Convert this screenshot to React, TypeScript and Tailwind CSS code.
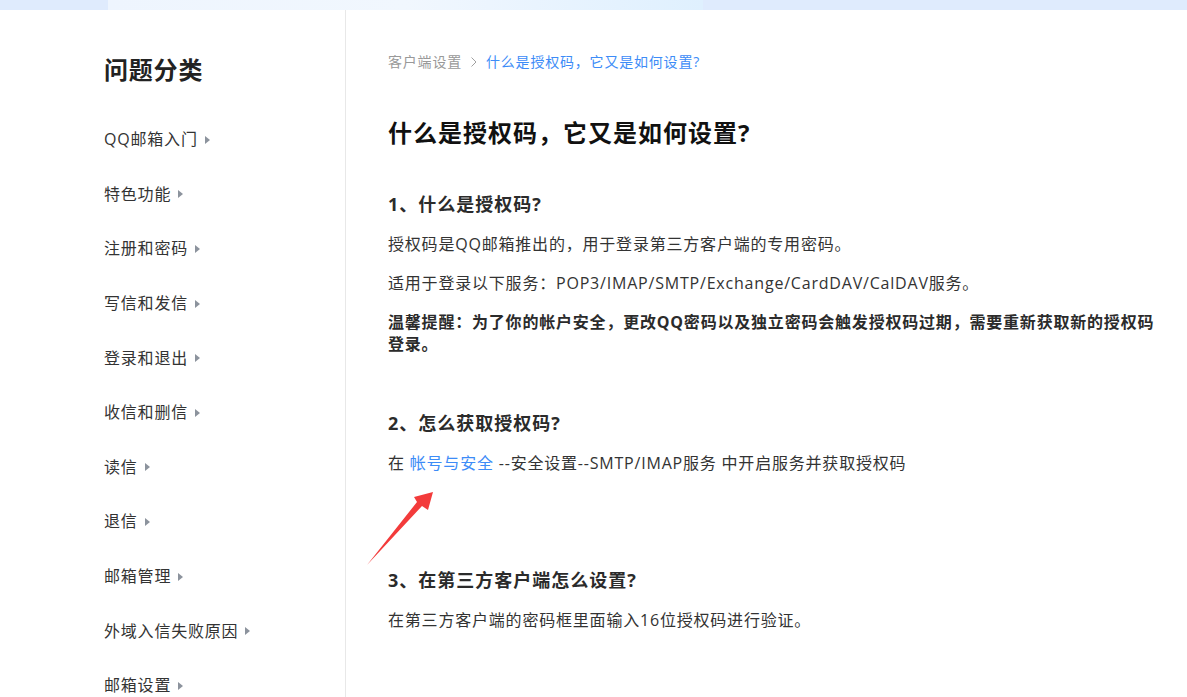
const font = { fontFamily: '"Open Sans", "Noto Sans CJK SC", sans-serif' };

const categories = [
  'QQ邮箱入门',
  '特色功能',
  '注册和密码',
  '写信和发信',
  '登录和退出',
  '收信和删信',
  '读信',
  '退信',
  '邮箱管理',
  '外域入信失败原因',
  '邮箱设置',
];

function Sidebar() {
  return (
    <aside className="w-[346px] shrink-0 border-r border-[#e8e8e8] pl-[104px] pt-[44px]">
      <h2 className="text-[24px] leading-8 font-bold text-[#222] tracking-[0.8px]">问题分类</h2>
      <ul className="mt-[26px]">
        {categories.map((c) => (
          <li key={c} className="h-[54.6px] flex items-center text-[16px] text-[#333] tracking-[0.8px]">
            <span>{c}</span>
            <span className="ml-[7px] mt-[1px] w-0 h-0 border-y-[4px] border-y-transparent border-l-[5px] border-l-[#8c939d]" />
          </li>
        ))}
      </ul>
    </aside>
  );
}

function Arrow() {
  return (
    <svg
      className="absolute left-0 top-0 pointer-events-none"
      width="1187"
      height="697"
      viewBox="0 0 1187 697"
    >
      <polygon
        points="367,565 417,502 414,497 433,492 428,510 422,506"
        fill="#f33b3b"
      />
    </svg>
  );
}

export default function App() {
  return (
    <div className="relative h-[697px] w-[1187px] overflow-hidden bg-white flex flex-col" style={font}>
      <div className="h-[10px] shrink-0 bg-[#dfebfd] flex">
        <div className="ml-[108px] w-[595px] bg-gradient-to-r from-[#eef5fe] via-[#f1f7fe] to-[#dff0fe]" />
      </div>
      <div className="flex flex-1">
        <Sidebar />
        <main className="pl-[42px] pt-[42px] w-[820px]">
          <nav className="flex items-center text-[14px] leading-5 tracking-[0.8px]">
            <span className="text-[#999]">客户端设置</span>
            <svg className="mx-[9px]" width="6" height="10" viewBox="0 0 6 10">
              <path d="M0.5 0.5 L5 5 L0.5 9.5" fill="none" stroke="#a0a0a0" strokeWidth="1" />
            </svg>
            <span className="text-[#3d8cf7]">什么是授权码，它又是如何设置?</span>
          </nav>

          <h1 className="mt-[45px] text-[24px] leading-8 font-bold text-[#111] tracking-[1px]">
            什么是授权码，它又是如何设置?
          </h1>

          <h3 className="mt-[41px] text-[18px] leading-7 font-bold text-[#2b2b2b] tracking-[1px]">1、什么是授权码?</h3>
          <p className="mt-[15px] text-[16px] leading-[22px] text-[#333] tracking-[0.8px]">
            授权码是QQ邮箱推出的，用于登录第三方客户端的专用密码。
          </p>
          <p className="mt-[17px] text-[16px] leading-[22px] text-[#333] tracking-[0.8px]">
            适用于登录以下服务：POP3/IMAP/SMTP/Exchange/CardDAV/CalDAV服务。
          </p>
          <p className="mt-[17px] w-[777px] text-[16px] leading-[22px] font-bold text-[#2b2b2b] tracking-[0.8px]">
            温馨提醒：为了你的帐户安全，更改QQ密码以及独立密码会触发授权码过期，需要重新获取新的授权码登录。
          </p>

          <h3 className="mt-[54px] text-[18px] leading-7 font-bold text-[#2b2b2b] tracking-[1px]">2、怎么获取授权码?</h3>
          <p className="mt-[15px] text-[16px] leading-[22px] text-[#333] tracking-[0.8px]">
            在 <a className="text-[#3d8cf7]">帐号与安全</a> --安全设置--SMTP/IMAP服务 中开启服务并获取授权码
          </p>

          <h3 className="mt-[92px] text-[18px] leading-7 font-bold text-[#2b2b2b] tracking-[1px]">3、在第三方客户端怎么设置?</h3>
          <p className="mt-[15px] text-[16px] leading-[22px] text-[#333] tracking-[0.8px]">
            在第三方客户端的密码框里面输入16位授权码进行验证。
          </p>
        </main>
      </div>
      <Arrow />
    </div>
  );
}
